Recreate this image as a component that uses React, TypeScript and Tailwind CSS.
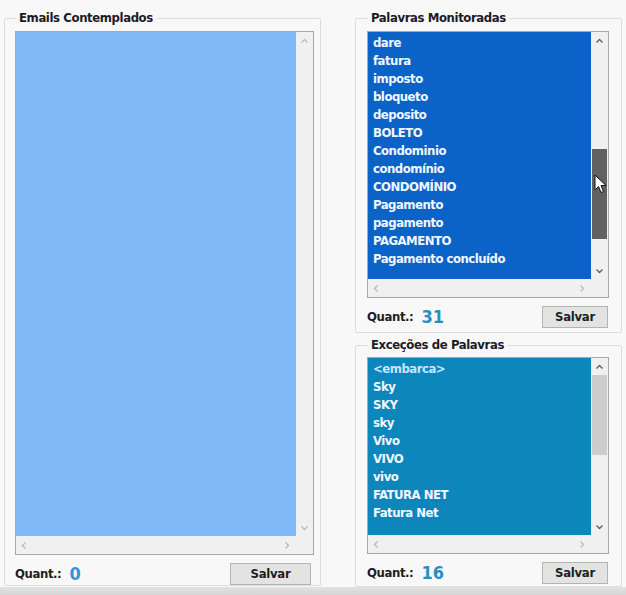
import type { ReactNode } from "react";

const FONT = { fontFamily: '"DejaVu Sans Condensed", Tahoma, "DejaVu Sans", sans-serif' };

const palavras = [
  "dare",
  "fatura",
  "imposto",
  "bloqueto",
  "deposito",
  "BOLETO",
  "Condominio",
  "condomínio",
  "CONDOMÍNIO",
  "Pagamento",
  "pagamento",
  "PAGAMENTO",
  "Pagamento concluído",
];

const excecoes = ["<embarca>", "Sky", "SKY", "sky", "Vivo", "VIVO", "vivo", "FATURA NET", "Fatura Net"];

function Chevron({ dir, dark }: { dir: "up" | "down" | "left" | "right"; dark?: boolean }) {
  const d = {
    up: "M1.5 5.5 L4.5 2.5 L7.5 5.5",
    down: "M1.5 2.5 L4.5 5.5 L7.5 2.5",
    left: "M5.5 1.5 L2.5 4.5 L5.5 7.5",
    right: "M2.5 1.5 L5.5 4.5 L2.5 7.5",
  }[dir];
  return (
    <svg width="9" height="8" viewBox="0 0 9 8">
      <path d={d} fill="none" stroke={dark ? "#606060" : "#bcbcbc"} strokeWidth="1.4" />
    </svg>
  );
}

function ListBox({
  items,
  bg,
  height,
  thumb,
  arrowsDark,
  firstLight,
}: {
  items: string[];
  bg: string;
  height: string;
  thumb?: ReactNode;
  arrowsDark?: boolean;
  firstLight?: boolean;
}) {
  return (
    <div className={`grid grid-cols-[1fr_17px] grid-rows-[1fr_18px] border border-[#a7a7a7] bg-[#f0f0f0] ${height}`}>
      <div className={`${bg} pl-[5px] pt-[2px] overflow-hidden`}>
        {items.map((item, i) => (
          <div
            key={item}
            className={`h-[18px] leading-[18px] text-[13px] tracking-[-0.5px] font-bold whitespace-nowrap ${
              firstLight && i === 0 ? "text-[#c4e6fb]" : "text-[#f2f7ff]"
            }`}
          >
            {item}
          </div>
        ))}
      </div>
      <div className="flex flex-col bg-[#f0f0f0]">
        <div className="h-[17px] flex items-center justify-center">
          <Chevron dir="up" dark={arrowsDark} />
        </div>
        <div className="flex-1 px-[1px]">{thumb}</div>
        <div className="h-[17px] flex items-center justify-center">
          <Chevron dir="down" dark={arrowsDark} />
        </div>
      </div>
      <div className="flex items-center justify-between px-[4px] bg-[#f0f0f0]">
        <Chevron dir="left" />
        <Chevron dir="right" />
      </div>
      <div className="bg-[#f0f0f0]" />
    </div>
  );
}

function Footer({ count, countColor, btnWidth }: { count: number; countColor: string; btnWidth: string }) {
  return (
    <div className="flex items-center justify-between">
      <div className="flex items-center gap-[8px]">
        <span className="text-[13px] tracking-[-0.4px] font-bold text-[#1e1e1e]">Quant.:</span>
        <span className={`text-[18px] font-bold ${countColor}`}>{count}</span>
      </div>
      <button
        className={`h-[22px] ${btnWidth} border border-[#b4b4b4] bg-[#e3e3e3] text-[13px] tracking-[-0.3px] font-bold text-[#1e1e1e]`}
      >
        Salvar
      </button>
    </div>
  );
}

function GroupBox({ title, className, children }: { title: string; className: string; children: ReactNode }) {
  return (
    <fieldset className={`border border-[#dcdcdc] rounded-[2px] ${className}`}>
      <legend className="ml-[1px] px-[3px] text-[13px] tracking-[-0.4px] leading-[16px] font-bold text-[#1c1c28]">
        {title}
      </legend>
      {children}
    </fieldset>
  );
}

export default function App() {
  return (
    <div style={FONT} className="w-[626px] h-[595px] bg-[#f8f8f8] flex flex-col overflow-hidden">
      <div className="flex-1 flex pt-[10px] pl-[4px]">
        {/* Emails */}
        <GroupBox title="Emails Contemplados" className="w-[317px] h-[576px] pt-[5px] pl-[10px] pr-[6px]">
          <ListBox items={[]} bg="bg-[#80b9f8]" height="h-[524px]" />
          <div className="pt-[5px] pr-[3px]">
            <Footer count={0} countColor="text-[#3690dc]" btnWidth="w-[81px]" />
          </div>
        </GroupBox>

        <div className="ml-[34px] w-[267px] flex flex-col gap-[4px]">
          {/* Palavras Monitoradas */}
          <GroupBox title="Palavras Monitoradas" className="h-[323px] pt-[5px] pl-[11px] pr-[12px]">
            <div className="relative">
              <ListBox
                items={palavras}
                bg="bg-[#0b63c8]"
                height="h-[267px]"
                arrowsDark
                thumb={<div className="mt-[100px] h-[90px] bg-[#616161]" />}
              />
              <svg className="absolute left-[227px] top-[143px]" width="13" height="20" viewBox="0 0 13 20">
                <path d="M1 1 L1 16 L4.5 12.5 L7 18.5 L9.5 17.5 L7 11.5 L12 11.5 Z" fill="#fff" stroke="#111" strokeWidth="1" />
              </svg>
            </div>
            <div className="pt-[5px] pr-[1px]">
              <Footer count={31} countColor="text-[#2a8ec4]" btnWidth="w-[66px]" />
            </div>
          </GroupBox>

          {/* Exceções */}
          <GroupBox title="Exceções de Palavras" className="h-[250px] pt-[4px] pl-[11px] pr-[12px]">
            <ListBox
              items={excecoes}
              bg="bg-[#0d86bb]"
              height="h-[197px]"
              arrowsDark
              firstLight
              thumb={<div className="h-[80px] bg-[#cdcdcd]" />}
            />
            <div className="pt-[5px] pr-[1px]">
              <Footer count={16} countColor="text-[#2a8ec4]" btnWidth="w-[66px]" />
            </div>
          </GroupBox>
        </div>
      </div>
      <div className="h-[8px] bg-gradient-to-b from-[#e2e2e2] to-[#d4d4d4]" />
    </div>
  );
}
